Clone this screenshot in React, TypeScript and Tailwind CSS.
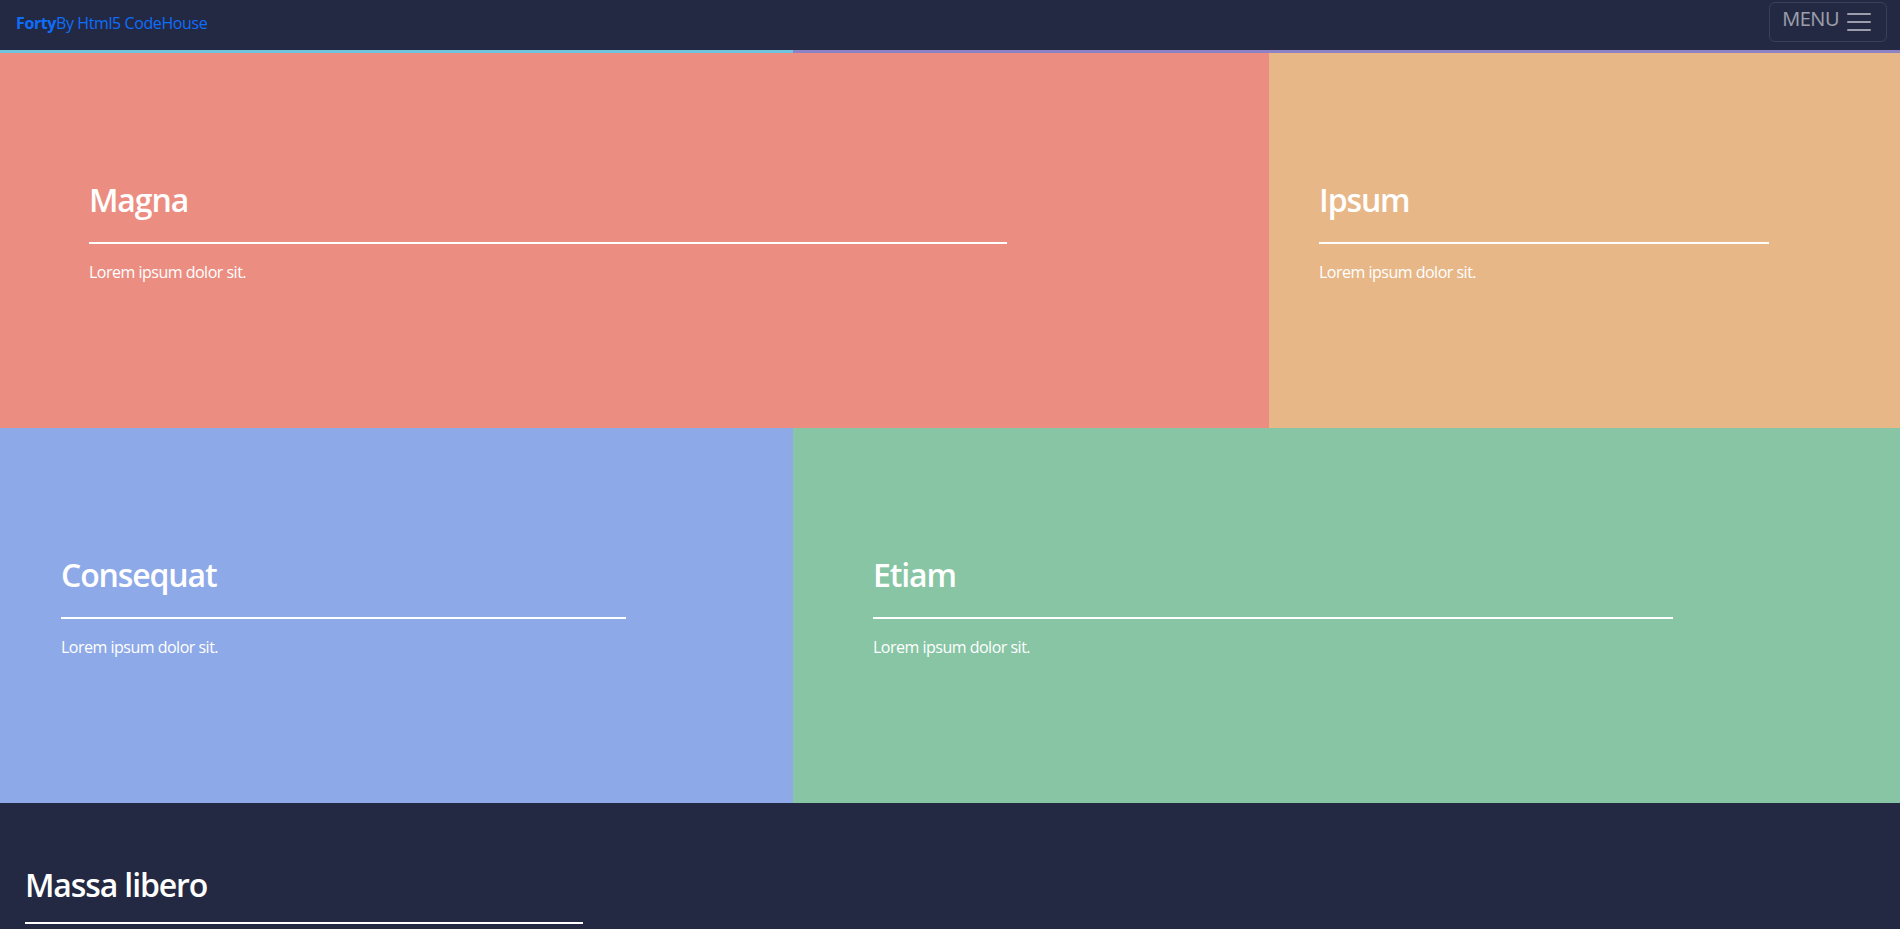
const tilesTop = [
  { title: "Magna", bg: "bg-[#ec8d81]", pad: "pl-[89px]", line: "w-[918px]" },
  { title: "Ipsum", bg: "bg-[#e7b788]", pad: "pl-[50px]", line: "w-[450px]" },
];

const tilesBottom = [
  { title: "Consequat", bg: "bg-[#8ea9e8]", pad: "pl-[61px]", line: "w-[565px]" },
  { title: "Etiam", bg: "bg-[#87c5a4]", pad: "pl-[80px]", line: "w-[800px]" },
];

type TileProps = { title: string; bg: string; pad: string; line: string };

function Tile({ title, bg, pad, line }: TileProps) {
  return (
    <article className={`h-[375px] pt-[128px] ${bg} ${pad}`}>
      <h2 className="text-[32px] leading-[38px] font-semibold tracking-[-0.035em] text-white">{title}</h2>
      <div className={`mt-[23px] h-[2px] bg-white ${line}`}></div>
      <p className="mt-[16px] text-[16px] leading-[24px] tracking-[-0.5px] text-white">Lorem ipsum dolor sit.</p>
    </article>
  );
}

function MenuIcon() {
  return (
    <svg width="30" height="30" viewBox="0 0 30 30" className="ml-[5px] shrink-0">
      <path
        d="M4 7h22M4 15h22M4 23h22"
        stroke="rgba(255,255,255,0.55)"
        strokeWidth="2"
        strokeLinecap="round"
        strokeMiterlimit="10"
      />
    </svg>
  );
}

export default function App() {
  return (
    <div className="h-[929px] overflow-hidden bg-[#242943] font-['Open_Sans',sans-serif]">
      {/* navbar */}
      <header className="flex h-[50px] justify-between bg-[#242943]">
        <a className="pl-[16px] pt-[11px] text-[16px] leading-[24px] tracking-[-0.4px] text-[#0d6efd]">
          <strong className="font-bold">Forty</strong>
          <span>By Html5 CodeHouse</span>
        </a>
        <button className="mr-[13px] mt-[2px] flex h-[40px] items-start rounded-md border border-white/10 px-[12px] py-[4px]">
          <span className="-mt-[3px] text-[20px] leading-[30px] tracking-[-0.5px] text-white/55">MENU</span>
          <MenuIcon />
        </button>
      </header>
      <div className="flex h-[3px]">
        <div className="w-[793px] bg-[#6fc3df]"></div>
        <div className="flex-1 bg-[#8d82c4]"></div>
      </div>

      {/* tiles */}
      <section className="grid grid-cols-[1269px_1fr]">
        {tilesTop.map((t) => (
          <Tile key={t.title} {...t} />
        ))}
      </section>
      <section className="grid grid-cols-[793px_1fr]">
        {tilesBottom.map((t) => (
          <Tile key={t.title} {...t} />
        ))}
      </section>

      {/* next section */}
      <section className="h-[126px] pl-[25px] pt-[63px]">
        <h2 className="text-[32px] leading-[38px] font-semibold tracking-[-0.035em] text-white">Massa libero</h2>
        <div className="mt-[18px] h-[2px] w-[558px] bg-white"></div>
      </section>
    </div>
  );
}
